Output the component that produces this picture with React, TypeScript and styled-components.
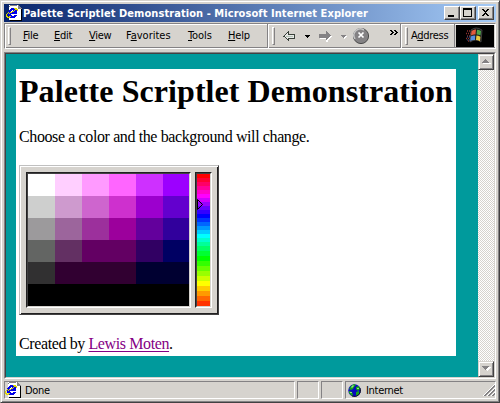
import React from "react";
import styled, { createGlobalStyle } from "styled-components";

const face = "#d6d3ce";
const shadow = "#848284";
const dark = "#424142";
const teal = "#009a9c";

const Global = createGlobalStyle`
  * { box-sizing: border-box; }
  html, body { margin: 0; padding: 0; overflow: hidden; background: ${face}; }
  svg { display: block; flex: none; }
`;

const Window = styled.div`
  width: 500px;
  height: 403px;
  display: flex;
  flex-direction: column;
  background: ${face};
  border: 1px solid;
  border-color: ${face} ${dark} ${dark} ${face};
  box-shadow: inset 1px 1px #fff, inset -1px -1px ${shadow};
  padding: 3px;
  font: 11px/14px "DejaVu Sans Condensed", "DejaVu Sans", sans-serif;
  font-stretch: condensed;
  color: #000;
  white-space: nowrap;
`;

const TitleBar = styled.header`
  height: 18px;
  flex: none;
  display: flex;
  align-items: center;
  padding: 0 2px;
  background: linear-gradient(90deg, #08246b, #a5cbf7);
`;

const Title = styled.h1`
  margin: 0 auto 0 1px;
  padding-top: 1px;
  color: #fff;
  font: inherit;
  font-weight: bold;
  letter-spacing: 0.07px;
`;

const CaptionButton = styled.button<{ $gap?: number }>`
  width: 16px;
  height: 14px;
  margin: 0 0 0 ${(p) => p.$gap ?? 0}px;
  padding: 0;
  border: 1px solid;
  border-color: #fff ${dark} ${dark} #fff;
  box-shadow: inset -1px -1px ${shadow};
  background: ${face};
`;

const Toolbar = styled.nav`
  height: 26px;
  flex: none;
  margin-top: 1px;
  display: flex;
  border: 1px solid;
  border-color: ${shadow} #fff #fff ${shadow};
  box-shadow: inset 1px 1px #fff, inset 0 -1px ${shadow};
`;

const Band = styled.div<{ $width: number; $first?: boolean }>`
  width: ${(p) => p.$width}px;
  flex: none;
  display: flex;
  align-items: center;
  padding-left: ${(p) => (p.$first ? 3 : 4)}px;
  border-right: 1px solid ${shadow};
  box-shadow: ${(p) => (p.$first ? "none" : "inset 1px 0 #fff")};
`;

const Grip = styled.i`
  width: 3px;
  height: 18px;
  flex: none;
  border: 1px solid;
  border-color: #fff ${shadow} ${shadow} #fff;
`;

const MenuItem = styled.span<{ $width: number; $spacing?: number }>`
  width: ${(p) => p.$width}px;
  letter-spacing: ${(p) => p.$spacing ?? -0.3}px;
  u { text-underline-offset: 1px; text-decoration-thickness: 1px; }
`;

const Menus = styled.div<{ $inset: number }>`
  display: flex;
  padding-left: ${(p) => p.$inset}px;
`;

const LogoBox = styled.div`
  width: 38px;
  height: 22px;
  margin: 1px 0 0 1px;
  display: flex;
  justify-content: center;
  background: #000;
`;

const Viewport = styled.main`
  height: 327px;
  flex: none;
  margin-top: 3px;
  display: flex;
  border: 1px solid;
  border-color: ${shadow} #fff #fff ${shadow};
`;

const ViewportInner = styled.div`
  flex: 1;
  display: flex;
  border: 1px solid;
  border-color: ${dark} ${face} ${face} ${dark};
`;

const Page = styled.div`
  width: 472px;
  background: ${teal};
  padding: 15px 22px 21px 10px;
`;

const Sheet = styled.article`
  height: 287px;
  background: #fff;
  padding: 3px;
  font: 16px/20px "Liberation Serif", serif;
  font-stretch: normal;
`;

const Heading = styled.h2`
  margin: 0;
  font-size: 32px;
  line-height: 38px;
  font-weight: bold;
  letter-spacing: 0.065px;
`;

const Paragraph = styled.p<{ $top: number }>`
  margin: ${(p) => p.$top}px 0 0;
  letter-spacing: -0.39px;
`;

const Link = styled.a`
  color: #840084;
  text-decoration: underline;
  text-decoration-thickness: 1px;
  text-underline-offset: 2px;
`;

const Palette = styled.section`
  width: 200px;
  height: 150px;
  margin-top: 18px;
  padding: 6px;
  display: flex;
  gap: 4px;
  background: ${face};
  border: 1px solid;
  border-color: #c0c0c0 #424142 #424142 #c0c0c0;
  box-shadow: inset 1px 1px #fff, inset -1px -1px #212021;
`;

const Well = styled.div<{ $width: number }>`
  width: ${(p) => p.$width}px;
  height: 136px;
  flex: none;
  border: 1px solid;
  border-color: #212021 #fff #fff #212021;
`;

const WellInner = styled.div`
  height: 134px;
  overflow: hidden;
  border: 1px solid;
  border-color: ${dark} ${face} ${face} ${dark};
  position: relative;
`;

const Swatches = styled.div`
  display: grid;
  grid-template-columns: repeat(6, 27px);
  grid-auto-rows: 22px;
`;

const Swatch = styled.div<{ $color: string }>`
  background: ${(p) => p.$color};
`;

const HueStep = styled.div<{ $color: string; $height: number }>`
  height: ${(p) => p.$height}px;
  background: ${(p) => p.$color};
`;

const Pointer = styled.svg`
  position: absolute;
  left: 0;
  top: 25px;
`;

const ScrollBar = styled.div`
  width: 16px;
  display: flex;
  flex-direction: column;
  justify-content: space-between;
  background: repeating-conic-gradient(#fff 0 25%, ${face} 0 50%) 0 0 / 2px 2px;
`;

const ScrollButton = styled.button`
  width: 16px;
  height: 16px;
  padding: 0;
  display: flex;
  align-items: center;
  justify-content: center;
  background: ${face};
  border: 1px solid;
  border-color: ${face} ${dark} ${dark} ${face};
  box-shadow: inset 1px 1px #fff, inset -1px -1px ${shadow};
`;

const StatusBar = styled.footer`
  display: flex;
  gap: 2px;
  margin-top: 2px;
  height: 18px;
`;

const Panel = styled.div<{ $width: number; $inset?: number }>`
  width: ${(p) => p.$width}px;
  flex: none;
  display: flex;
  align-items: center;
  padding-left: ${(p) => p.$inset ?? 0}px;
  border: 1px solid;
  border-color: ${shadow} #fff #fff ${shadow};
`;

const StatusText = styled.span<{ $left: number; $spacing: number }>`
  margin-left: ${(p) => p.$left}px;
  margin-right: auto;
  padding-top: 1px;
  letter-spacing: ${(p) => p.$spacing}px;
`;

const swatches = [
  ["#ffffff", "#ffcfff", "#ff9aff", "#ff65ff", "#ce30ff", "#9c00ff"],
  ["#cecfce", "#ce9ace", "#ce65ce", "#ce30ce", "#9c00ce", "#6300ce"],
  ["#9c9a9c", "#9c659c", "#9c309c", "#9c009c", "#63009c", "#31009c"],
  ["#636563", "#633063", "#630063", "#630063", "#310063", "#000063"],
  ["#313031", "#310031", "#310031", "#310031", "#000031", "#000031"],
  ["#000", "#000", "#000", "#000", "#000", "#000"],
].flat();

const hues = Array.from({ length: 30 }, (_, i) => {
  const t = (i % 5) * 51;
  const s = 255 - t;
  const sectors = [
    [255, 0, t],
    [s, 0, 255],
    [0, t, 255],
    [0, 255, s],
    [t, 255, 0],
    [255, s, 0],
  ];
  return `rgb(${sectors[Math.floor(i / 5)].join(",")})`;
});

const ExplorerIcon = () => (
  <svg width="16" height="16" viewBox="0 0 16 16" shapeRendering="crispEdges">
    <path d="M3 0H12L15 3V15H3Z" fill="#fff" />
    <path d="M3 0H12V1H3ZM3 0V2H4V0ZM11 1H12V4H15V15H16V3H15V2H14V1H13V0H11Z" fill="#848284" />
    <path d="M4 15H16V16H4ZM15 4H16V16H15Z" fill="#000" />
    <path d="M5 3H9V4H10V5H11V9H5V10H6V11H8V10H11V11H10V12H9V13H4V12H3V11H2V6H3V5H4V4H5ZM5 6V7H8V6H7V5H6V6Z" fill="#0000e8" />
    <path d="M8 3H11V4H12V6H11V5H9V4H8ZM2 7H3V8H2V9H1V11H2V12H3V11H5V12H4V13H1V12H0V9H1V8H2ZM4 7H6V6H8V5H9V6H8V7H6V8H4V9H3V8H4Z" fill="#ded700" />
  </svg>
);

const Glyph = ({ d }: { d: string }) => (
  <svg width="14" height="12" viewBox="0 0 14 12" shapeRendering="crispEdges">
    <path d={d} fill="#000" />
  </svg>
);

const NavIcons = () => (
  <svg width="125" height="22" viewBox="275 25 125 22">
    <g shapeRendering="crispEdges">
      <path d="M284 36H285V35H286V34H287V33H288V32H289V34H295V39H289V41H288V40H287V39H286V38H285V37H284Z" fill="#e7e7e7" />
      <path d="M283 36H284V35H285V34H286V33H287V32H288V31H289V34H295V39H289V41H288V40H287V39H286V38H285V37H283ZM285 36V37H286V38H287V39H288V38H294V35H288V33H287V34H286V35H285Z" fill="#39413a" />
      <path d="M286 36H293V37H286Z" fill="#b5c7b5" />
      <path d="M305 35H310V36H309V37H308V38H307V37H306V36H305Z" fill="#000" />
      <path d="M320 35H327V32H328V33H329V34H330V35H331V36H332V37H331V38H330V39H329V40H328V42H326V39H320Z" fill="#fff" />
      <path d="M319 34H326V31H327V32H328V33H329V34H330V35H331V36H330V37H329V38H328V39H327V40H326V38H319Z" fill="#848284" />
      <path d="M342 36H347V37H346V38H345V39H344V38H343V37H342Z" fill="#fff" />
      <path d="M341 35H346V36H345V37H344V38H343V37H342V36H341Z" fill="#848284" />
    </g>
    <circle cx="361" cy="36" r="7.6" fill="#848284" stroke="#4b4b4b" />
    <path d="M355 39A6.5 6.5 0 0 1 364 30" fill="none" stroke="#c6c6c6" strokeWidth="1.5" />
    <path d="M358.5 32.5L363.5 37.5M363.5 32.5L358.5 37.5" stroke="#fff" strokeWidth="1.7" />
    <path
      d="M390 30H392V31H393V32H394V33H393V34H392V35H390V34H391V33H392V32H391V31H390ZM394 30H396V31H397V32H398V33H397V34H396V35H394V34H395V33H396V32H395V31H394Z"
      fill="#000"
      shapeRendering="crispEdges"
    />
  </svg>
);

const FlagLogo = () => (
  <svg width="20" height="22" viewBox="0 0 20 22">
    <path d="M2 6h6M1 8.5h6M2 11h5M1 13.5h6M3 16h4" stroke="#8a3030" strokeWidth="1.3" strokeDasharray="1 1" />
    <path d="M2 12h5M2 15h5" stroke="#285898" strokeWidth="1.2" strokeDasharray="1 1" />
    <path d="M6 5Q11 1 17 5L16 17Q11 13 5 17Z" fill="#171717" stroke="#555" strokeWidth=".7" />
    <path d="M6.5 6Q9 4 11 4.5L10.5 9.5Q8.5 9 6 10.5Z" fill="#e35b3d" />
    <path d="M12 4.7Q14 4.8 16 6L15.5 10.6Q14 9.5 11.5 9.4Z" fill="#4fa34b" />
    <path d="M5.8 11.5Q8 10 10.3 10.5L10 15Q8 14.5 5.3 16Z" fill="#578fe0" />
    <path d="M11.4 10.5Q13.5 10.5 15.5 11.7L15 16.2Q13 15 11 15Z" fill="#e9c840" />
  </svg>
);

const Globe = () => (
  <svg width="13" height="13" viewBox="0 0 13 13">
    <circle cx="6.5" cy="6.5" r="6.2" fill="#0909bf" />
    <path d="M3 2L6 0L8 1L6 3L5 5L3 6L1 5ZM8 3L11 2L12 5L10 7L8 5ZM1 7L4 8L5 11L4 12L1 9ZM8 8L11 7L11 10L8 12Z" fill="#16a51b" />
    <path d="M3 3L5 1L6 2L4 4ZM9 4H11V5H9ZM2 8H4V9H2Z" fill="#8ce57c" />
    <path d="M12 4Q14 8 10.5 11Q8 13.5 4 12" fill="none" stroke="#141426" />
  </svg>
);

const SizeGrip = () => (
  <svg width="12" height="12" viewBox="0 0 12 12">
    <path d="M0 12L12 0M4 12L12 4M8 12L12 8" stroke="#fff" />
    <path d="M1 12L12 1M2 12L12 2M5 12L12 5M6 12L12 6M9 12L12 9M10 12L12 10" stroke={shadow} />
  </svg>
);

const Arrow = ({ down }: { down?: boolean }) => (
  <svg width="9" height="6" viewBox="0 0 9 6" shapeRendering="crispEdges">
    <path d={down ? "M1 1H9V2H8V3H7V4H6V5H5V4H4V3H3V2H2Z" : "M1 4H9V5H1Z"} fill="#fff" />
    <path d={down ? "M0 0H7V1H6V2H5V3H4V4H3V3H2V2H1V1H0Z" : "M3 0H4V1H5V2H6V3H7V4H0V3H1V2H2V1H3Z"} fill={shadow} />
  </svg>
);

export default function App() {
  return (
    <Window>
      <Global />
      <TitleBar>
        <ExplorerIcon />
        <Title>Palette Scriptlet Demonstration - Microsoft Internet Explorer</Title>
        <CaptionButton aria-label="Minimize"><Glyph d="M3 8H9V10H3Z" /></CaptionButton>
        <CaptionButton aria-label="Maximize"><Glyph d="M2 1H11V10H2ZM3 3V9H10V3Z" /></CaptionButton>
        <CaptionButton $gap={2} aria-label="Close">
          <Glyph d="M3 2H5V3H6V4H7V3H8V2H10V3H9V4H8V5H7V6H8V7H9V8H10V9H8V8H7V7H6V8H5V9H3V8H4V7H5V6H6V5H5V4H4V3H3Z" />
        </CaptionButton>
      </TitleBar>
      <Toolbar>
        <Band $width={263} $first>
          <Grip />
          <Menus $inset={12}>
            <MenuItem $width={31}><u>F</u>ile</MenuItem>
            <MenuItem $width={35}><u>E</u>dit</MenuItem>
            <MenuItem $width={37}><u>V</u>iew</MenuItem>
            <MenuItem $width={62} $spacing={0}>F<u>a</u>vorites</MenuItem>
            <MenuItem $width={40} $spacing={-0.1}><u>T</u>ools</MenuItem>
            <MenuItem $width={30} $spacing={-0.2}><u>H</u>elp</MenuItem>
          </Menus>
        </Band>
        <Band $width={133}>
          <Grip />
          <NavIcons />
        </Band>
        <Band $width={54}>
          <Grip />
          <Menus $inset={3}>
            <MenuItem $width={40} $spacing={-0.3}>A<u>d</u>dress</MenuItem>
          </Menus>
        </Band>
        <LogoBox><FlagLogo /></LogoBox>
      </Toolbar>
      <Viewport>
        <ViewportInner>
          <Page>
            <Sheet>
              <Heading>Palette Scriptlet Demonstration</Heading>
              <Paragraph $top={17}>Choose a color and the background will change.</Paragraph>
              <Palette>
                <Well $width={165}>
                  <WellInner>
                    <Swatches>
                      {swatches.map((c, i) => <Swatch key={i} $color={c} />)}
                    </Swatches>
                  </WellInner>
                </Well>
                <Well $width={17}>
                  <WellInner>
                    {hues.map((c, i) => <HueStep key={c} $color={c} $height={i < 18 ? 4 : 5} />)}
                    <Pointer width="7" height="12" viewBox="0 0 7 12">
                      <path d="M.5 .5V10.5L5.5 5.5Z" fill="none" stroke="#000" />
                    </Pointer>
                  </WellInner>
                </Well>
              </Palette>
              <Paragraph $top={19}>Created by <Link>Lewis Moten</Link>.</Paragraph>
            </Sheet>
          </Page>
          <ScrollBar>
            <ScrollButton aria-label="Scroll up"><Arrow /></ScrollButton>
            <ScrollButton aria-label="Scroll down"><Arrow down /></ScrollButton>
          </ScrollBar>
        </ViewportInner>
      </Viewport>
      <StatusBar>
        <Panel $width={291}>
          <ExplorerIcon />
          <StatusText $left={4} $spacing={-0.3}>Done</StatusText>
        </Panel>
        <Panel $width={22} />
        <Panel $width={22} />
        <Panel $width={151} $inset={2}>
          <Globe />
          <StatusText $left={5} $spacing={-0.3}>Internet</StatusText>
          <SizeGrip />
        </Panel>
      </StatusBar>
    </Window>
  );
}
